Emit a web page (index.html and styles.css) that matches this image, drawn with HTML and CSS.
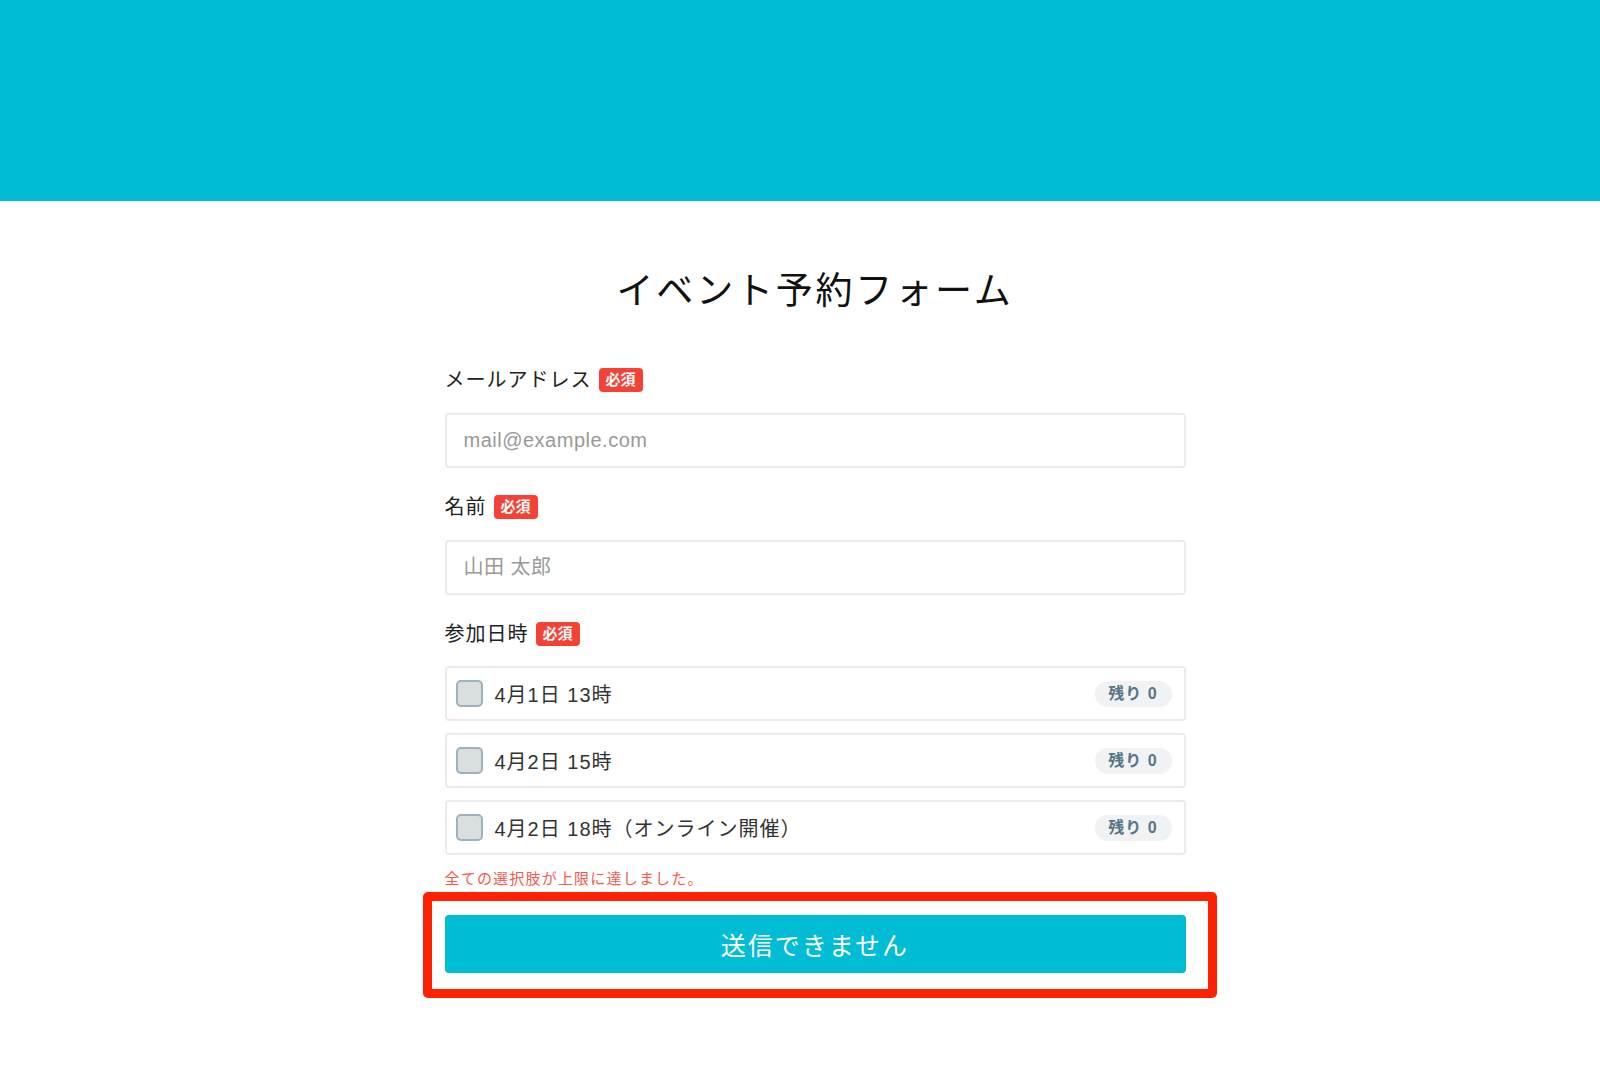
FILE: index.html
```html
<!DOCTYPE html>
<html lang="ja">
<head>
    <meta charset="UTF-8">
    <meta name="viewport" content="width=device-width, initial-scale=1.0">
    <title>イベント予約フォーム</title>
    <link rel="stylesheet" href="styles.css">
</head>
<body>
    <header class="top-bar"></header>

    <main class="page">
        <form class="reserve-form" name="reserve">
            <h1 class="form-title">イベント予約フォーム</h1>

            <div class="field">
                <p class="field-label">メールアドレス<span class="required">必須</span></p>
                <input class="text-input" type="email" placeholder="mail@example.com">
            </div>

            <div class="field">
                <p class="field-label">名前<span class="required">必須</span></p>
                <input class="text-input" type="text" placeholder="山田 太郎">
            </div>

            <div class="field">
                <p class="field-label">参加日時<span class="required">必須</span></p>
                <div class="choices">
                    <label class="choice">
                        <span class="check"></span>
                        <span class="choice-text">4月1日 13時</span>
                        <span class="remain">残り 0</span>
                    </label>
                    <label class="choice">
                        <span class="check"></span>
                        <span class="choice-text">4月2日 15時</span>
                        <span class="remain">残り 0</span>
                    </label>
                    <label class="choice">
                        <span class="check"></span>
                        <span class="choice-text">4月2日 18時（オンライン開催）</span>
                        <span class="remain">残り 0</span>
                    </label>
                </div>
                <p class="error">全ての選択肢が上限に達しました。</p>
            </div>

            <div class="submit-wrap">
                <button class="submit" type="button">送信できません</button>
                <span class="highlight"></span>
            </div>
        </form>
    </main>
</body>
</html>
```

FILE: styles.css
```css
body {
    margin: 0;
    font-family: "Liberation Sans", "Noto Sans CJK JP", sans-serif;
    color: #222;
    background-color: #ffffff;
}

.top-bar {
    height: 201px;
    background-color: #00bcd4;
}

.page {
    padding: 68px 0 80px 30px;
}

.reserve-form {
    width: 741px;
    margin: 0 auto;
}

.form-title {
    margin: 0 0 50px;
    font-size: 37px;
    font-weight: 400;
    line-height: 46px;
    letter-spacing: 2.8px;
    text-align: center;
    color: #111;
}

/* Campos */
.field {
    margin-bottom: 24px;
}

.field-label {
    display: flex;
    align-items: center;
    margin: 0 0 18px;
    font-size: 20px;
    line-height: 30px;
    letter-spacing: 1px;
}

.required {
    display: inline-block;
    margin-left: 7px;
    padding: 0 7px;
    height: 24px;
    line-height: 24px;
    font-size: 15px;
    font-weight: bold;
    letter-spacing: 0;
    color: #ffffff;
    background-color: #f44336;
    border-radius: 4px;
}

.text-input {
    display: block;
    box-sizing: border-box;
    width: 100%;
    height: 55px;
    padding: 0 17px;
    font-family: inherit;
    font-size: 20px;
    color: #222;
    border: 2px solid #ebebeb;
    border-radius: 4px;
    outline: none;
}

.text-input::placeholder {
    color: #999999;
    letter-spacing: 0.5px;
}

/* Opciones */
.choices {
    display: flex;
    flex-direction: column;
    gap: 12px;
    margin-top: -1px;
}

.choice {
    display: flex;
    align-items: center;
    box-sizing: border-box;
    height: 55px;
    padding: 0 12px 0 9px;
    border: 2px solid #ebebeb;
    border-radius: 4px;
}

.check {
    box-sizing: border-box;
    width: 27px;
    height: 27px;
    margin-right: 12px;
    background-color: #d9dee1;
    border: 2px solid #9fb1bc;
    border-radius: 5px;
}

.choice-text {
    flex: 1;
    font-size: 20px;
    letter-spacing: 1px;
    color: #333;
}

.remain {
    display: inline-block;
    width: 77px;
    height: 26px;
    line-height: 26px;
    text-align: center;
    font-size: 16px;
    font-weight: bold;
    letter-spacing: 1px;
    color: #567584;
    background-color: #f1f2f3;
    border-radius: 13px;
}

.error {
    margin: 14px 0 0;
    font-size: 15px;
    line-height: 20px;
    letter-spacing: 1.2px;
    color: #f55a4e;
}

/* Botón */
.submit-wrap {
    position: relative;
    margin-top: 26px;
}

.submit {
    display: block;
    width: 100%;
    height: 58px;
    font-family: inherit;
    font-size: 25px;
    letter-spacing: 2px;
    color: #ffffff;
    background-color: #00bcd4;
    border: none;
    border-radius: 4px;
}

.highlight {
    position: absolute;
    top: -23px;
    left: -22px;
    right: -31px;
    bottom: -25px;
    border: 9px solid #ff2200;
    border-radius: 5px;
    pointer-events: none;
}
```
